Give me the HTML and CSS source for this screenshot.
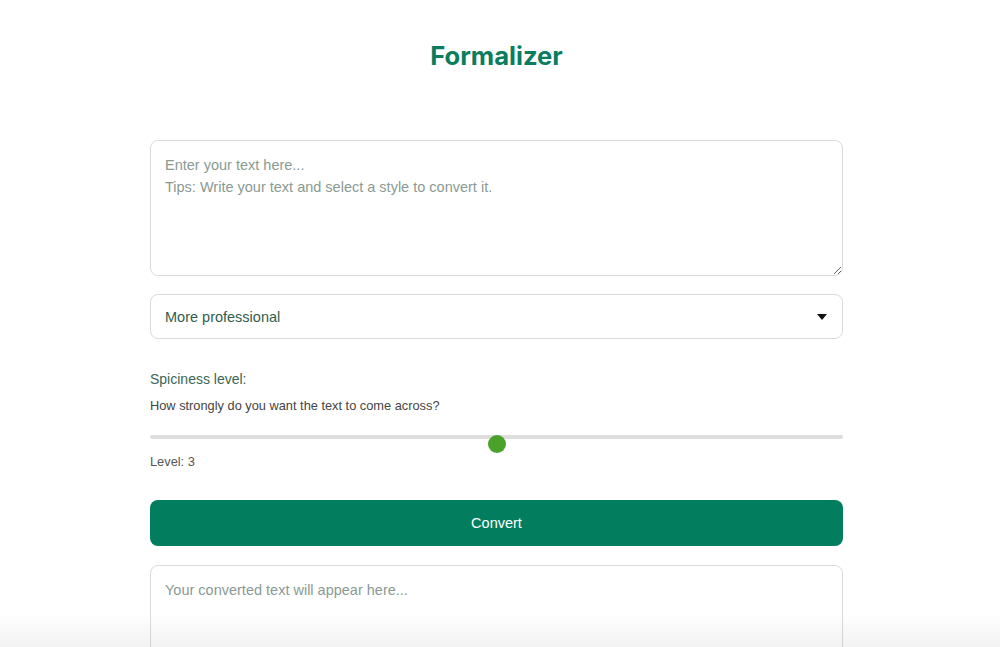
FILE: index.html
```html
<!DOCTYPE html>
<html lang="en">
<head>
<meta charset="utf-8">
<title>Formalizer</title>
<link rel="stylesheet" href="styles.css">
</head>
<body>
<main class="app">
  <h1 class="title">Formalizer</h1>
  <textarea class="input-text" placeholder="Enter your text here...&#10;Tips: Write your text and select a style to convert it."></textarea>
  <div class="select-wrap">
    <select class="style-select">
      <option>More professional</option>
    </select>
    <svg class="caret" width="10" height="6" viewBox="0 0 10 6"><path d="M0 0H10L5 6Z" fill="#111"/></svg>
  </div>
  <section class="spice">
    <label class="spice-label">Spiciness level:</label>
    <p class="spice-help">How strongly do you want the text to come across?</p>
    <input class="slider" type="range" min="1" max="5" value="3">
    <p class="level">Level: 3</p>
  </section>
  <button class="convert">Convert</button>
  <textarea class="output-text" placeholder="Your converted text will appear here..." readonly></textarea>
</main>
<div class="bottom-fade"></div>
</body>
</html>
```
FILE: styles.css
```css
* { box-sizing: border-box; }
html, body { margin: 0; padding: 0; background: #fff; }
body {
  font-family: "Liberation Sans", Arial, sans-serif;
  overflow: hidden;
  height: 647px;
  padding-right: 7px;
}
.app {
  width: 693px;
  margin: 0 auto;
  display: flex;
  flex-direction: column;
}
.title {
  font-family: Inter, "Liberation Sans", sans-serif;
  font-weight: 700;
  font-size: 25.6px;
  color: #0a7d5e;
  text-align: center;
  margin: 40px 0 0 0;
  line-height: 32px;
}
.input-text {
  margin-top: 68px;
  width: 100%;
  height: 136px;
  border: 1px solid #d9dcdb;
  border-radius: 8px;
  padding: 13px 14px;
  font-family: "Liberation Sans", Arial, sans-serif;
  font-size: 14.5px;
  line-height: 22px;
  color: #333;
  resize: vertical;
  outline: none;
}
.input-text::placeholder, .output-text::placeholder { color: #8a9a93; }
.select-wrap {
  position: relative;
  margin-top: 18px;
}
.style-select {
  width: 100%;
  height: 45px;
  border: 1px solid #d9dcdb;
  border-radius: 8px;
  background: #fff;
  padding: 0 14px;
  font-family: "Liberation Sans", Arial, sans-serif;
  font-size: 14.5px;
  color: #2f5e4d;
  appearance: none;
  -webkit-appearance: none;
  outline: none;
}
.caret {
  position: absolute;
  right: 16px;
  top: 20px;
  pointer-events: none;
}
.spice { display: flex; flex-direction: column; margin-top: 32px; }
.spice-label {
  font-size: 14px;
  color: #3b6656;
  line-height: 16px;
}
.spice-help {
  margin: 11px 0 0 0;
  font-size: 12.8px;
  color: #444;
  line-height: 16px;
}
.slider {
  -webkit-appearance: none;
  appearance: none;
  width: 100%;
  margin: 14px 0 0 0;
  height: 18px;
  background: transparent;
}
.slider::-webkit-slider-runnable-track {
  height: 4px;
  background: #dedede;
  border-radius: 2px;
}
.slider::-webkit-slider-thumb {
  -webkit-appearance: none;
  width: 18px;
  height: 18px;
  border-radius: 50%;
  background: #4ba22b;
  border: none;
}
.level {
  margin: 8px 0 0 0;
  font-size: 12.8px;
  color: #555;
  line-height: 16px;
}
.convert {
  margin-top: 30px;
  height: 46px;
  width: 100%;
  border: none;
  border-radius: 8px;
  background: #027e5f;
  color: #fff;
  font-family: "Liberation Sans", Arial, sans-serif;
  font-size: 14.5px;
}
.output-text {
  margin-top: 19px;
  width: 100%;
  height: 136px;
  border: 1px solid #d9dcdb;
  border-radius: 8px;
  padding: 13px 14px;
  font-family: "Liberation Sans", Arial, sans-serif;
  font-size: 14.5px;
  line-height: 22px;
  resize: vertical;
  outline: none;
}
.bottom-fade {
  position: fixed;
  left: 0; right: 0; bottom: 0;
  height: 34px;
  background: linear-gradient(to bottom, rgba(0,0,0,0), rgba(0,0,0,0.05));
  pointer-events: none;
}
```
